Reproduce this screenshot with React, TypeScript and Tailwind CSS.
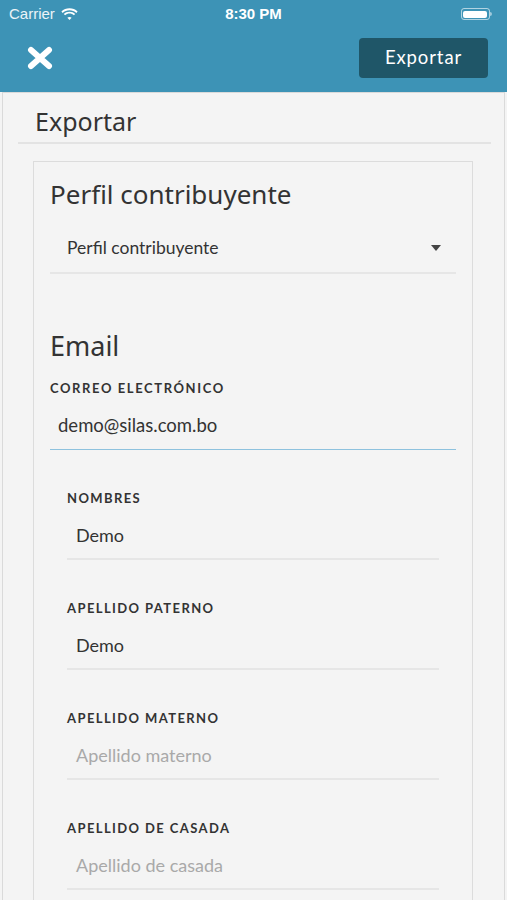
const fields = [
  { label: "NOMBRES", value: "Demo" },
  { label: "APELLIDO PATERNO", value: "Demo" },
  { label: "APELLIDO MATERNO", placeholder: "Apellido materno" },
  { label: "APELLIDO DE CASADA", placeholder: "Apellido de casada" },
];

const round = "font-['Lato','Noto_Sans',sans-serif]";
const heading = "font-['Noto_Sans','Open_Sans',sans-serif]";

function StatusBar() {
  return (
    <div className="flex h-[28px] items-center justify-between px-[9px] text-white">
      <div className="flex w-[120px] items-center gap-[6px] font-['Liberation_Sans',sans-serif] text-[15px] text-white/90">
        <span>Carrier</span>
        <svg width="17" height="12" viewBox="0 0 17 12" fill="white">
          <path d="M8.5 2.2c2.6 0 5 1 6.8 2.7l1.3-1.4C14.4 1.4 11.6.3 8.5.3S2.6 1.4.4 3.5l1.3 1.4C3.5 3.2 5.9 2.2 8.5 2.2z" />
          <path d="M8.5 5.6c1.7 0 3.2.6 4.4 1.7l1.3-1.4C12.7 4.5 10.7 3.7 8.5 3.7S4.3 4.5 2.8 5.9l1.3 1.4c1.2-1.1 2.7-1.7 4.4-1.7z" />
          <path d="M8.5 8.9c.8 0 1.5.3 2.1.8L8.5 11.9 6.4 9.7c.6-.5 1.3-.8 2.1-.8z" />
        </svg>
      </div>
      <span className="font-['Liberation_Sans',sans-serif] text-[15px] font-bold">8:30 PM</span>
      <div className="flex w-[120px] justify-end pr-[6px]">
        <div className="flex items-center">
          <div className="flex h-[12px] w-[29px] items-center rounded-[3px] border border-white/60 p-[1.5px]">
            <div className="h-full w-full rounded-[2px] bg-white" />
          </div>
          <div className="h-[4px] w-[2px] rounded-r-sm bg-white/50" />
        </div>
      </div>
    </div>
  );
}

export default function App() {
  return (
    <div className="h-[900px] w-[507px] overflow-hidden bg-[#f4f4f4] text-[#333]">
      <header className="h-[92px] bg-[#3d93b6]">
        <StatusBar />
        <div className="flex items-center justify-between pl-[27px] pr-[19px] pt-[10px]">
          <svg width="26" height="24" viewBox="0 0 26 24">
            <path d="M4 4 L22 20 M22 4 L4 20" stroke="white" strokeWidth="6" strokeLinecap="round" />
          </svg>
          <button className={`h-[40px] w-[129px] rounded-[4px] bg-[#1f5668] text-[18.5px] tracking-[0.9px] text-white ${round}`}>
            Exportar
          </button>
        </div>
      </header>

      <div className="mx-[2px] h-[808px] border-x border-t border-[#dadada]">
        <div className={`ml-[15px] mr-[13px] border-b-2 border-[#e3e3e3] pb-[3px] pl-[17px] pt-[10px] text-[25px] leading-[36px] ${heading}`}>
          Exportar
        </div>

        <div className="ml-[30px] mt-[17px] w-[440px] border border-[#dcdcdc] px-[16px] pb-10">
          <h2 className={`pt-[14px] text-[26px] leading-[36px] ${heading}`}>Perfil contribuyente</h2>

          <div className={`mt-[12px] flex h-[50px] items-center justify-between border-b-2 border-[#e6e6e6] pl-[17px] pr-[15px] text-[17.5px] ${round}`}>
            <span>Perfil contribuyente</span>
            <svg width="10" height="6" viewBox="0 0 10 6">
              <path d="M0 0 H10 L5 6 Z" fill="#444" />
            </svg>
          </div>

          <h2 className={`mt-[54px] text-[27px] leading-[36px] ${heading}`}>Email</h2>
          <div className={`mt-[14px] text-[13px] font-bold leading-[20px] tracking-[1.6px] text-[#333] ${round}`}>
            CORREO ELECTRÓNICO
          </div>
          <div className={`mt-[5px] flex h-[47px] items-center border-b-[1.5px] border-[#8ec2de] pl-[8px] text-[18.5px] ${round}`}>
            demo@silas.com.bo
          </div>

          <div className="px-[17px]">
            {fields.map((f) => (
              <div key={f.label} className="mt-[38px]">
                <div className={`text-[13px] font-bold leading-[20px] tracking-[1.4px] text-[#333] ${round}`}>
                  {f.label}
                </div>
                <div
                  className={`mt-[6px] flex h-[46px] items-center border-b-2 border-[#e6e6e6] pl-[9px] text-[18px] ${round} ${
                    f.value ? "text-[#333]" : "text-[#a9a9a9]"
                  }`}
                >
                  <span className="-translate-y-[1px]">{f.value ?? f.placeholder}</span>
                </div>
              </div>
            ))}
          </div>
        </div>
      </div>
    </div>
  );
}
